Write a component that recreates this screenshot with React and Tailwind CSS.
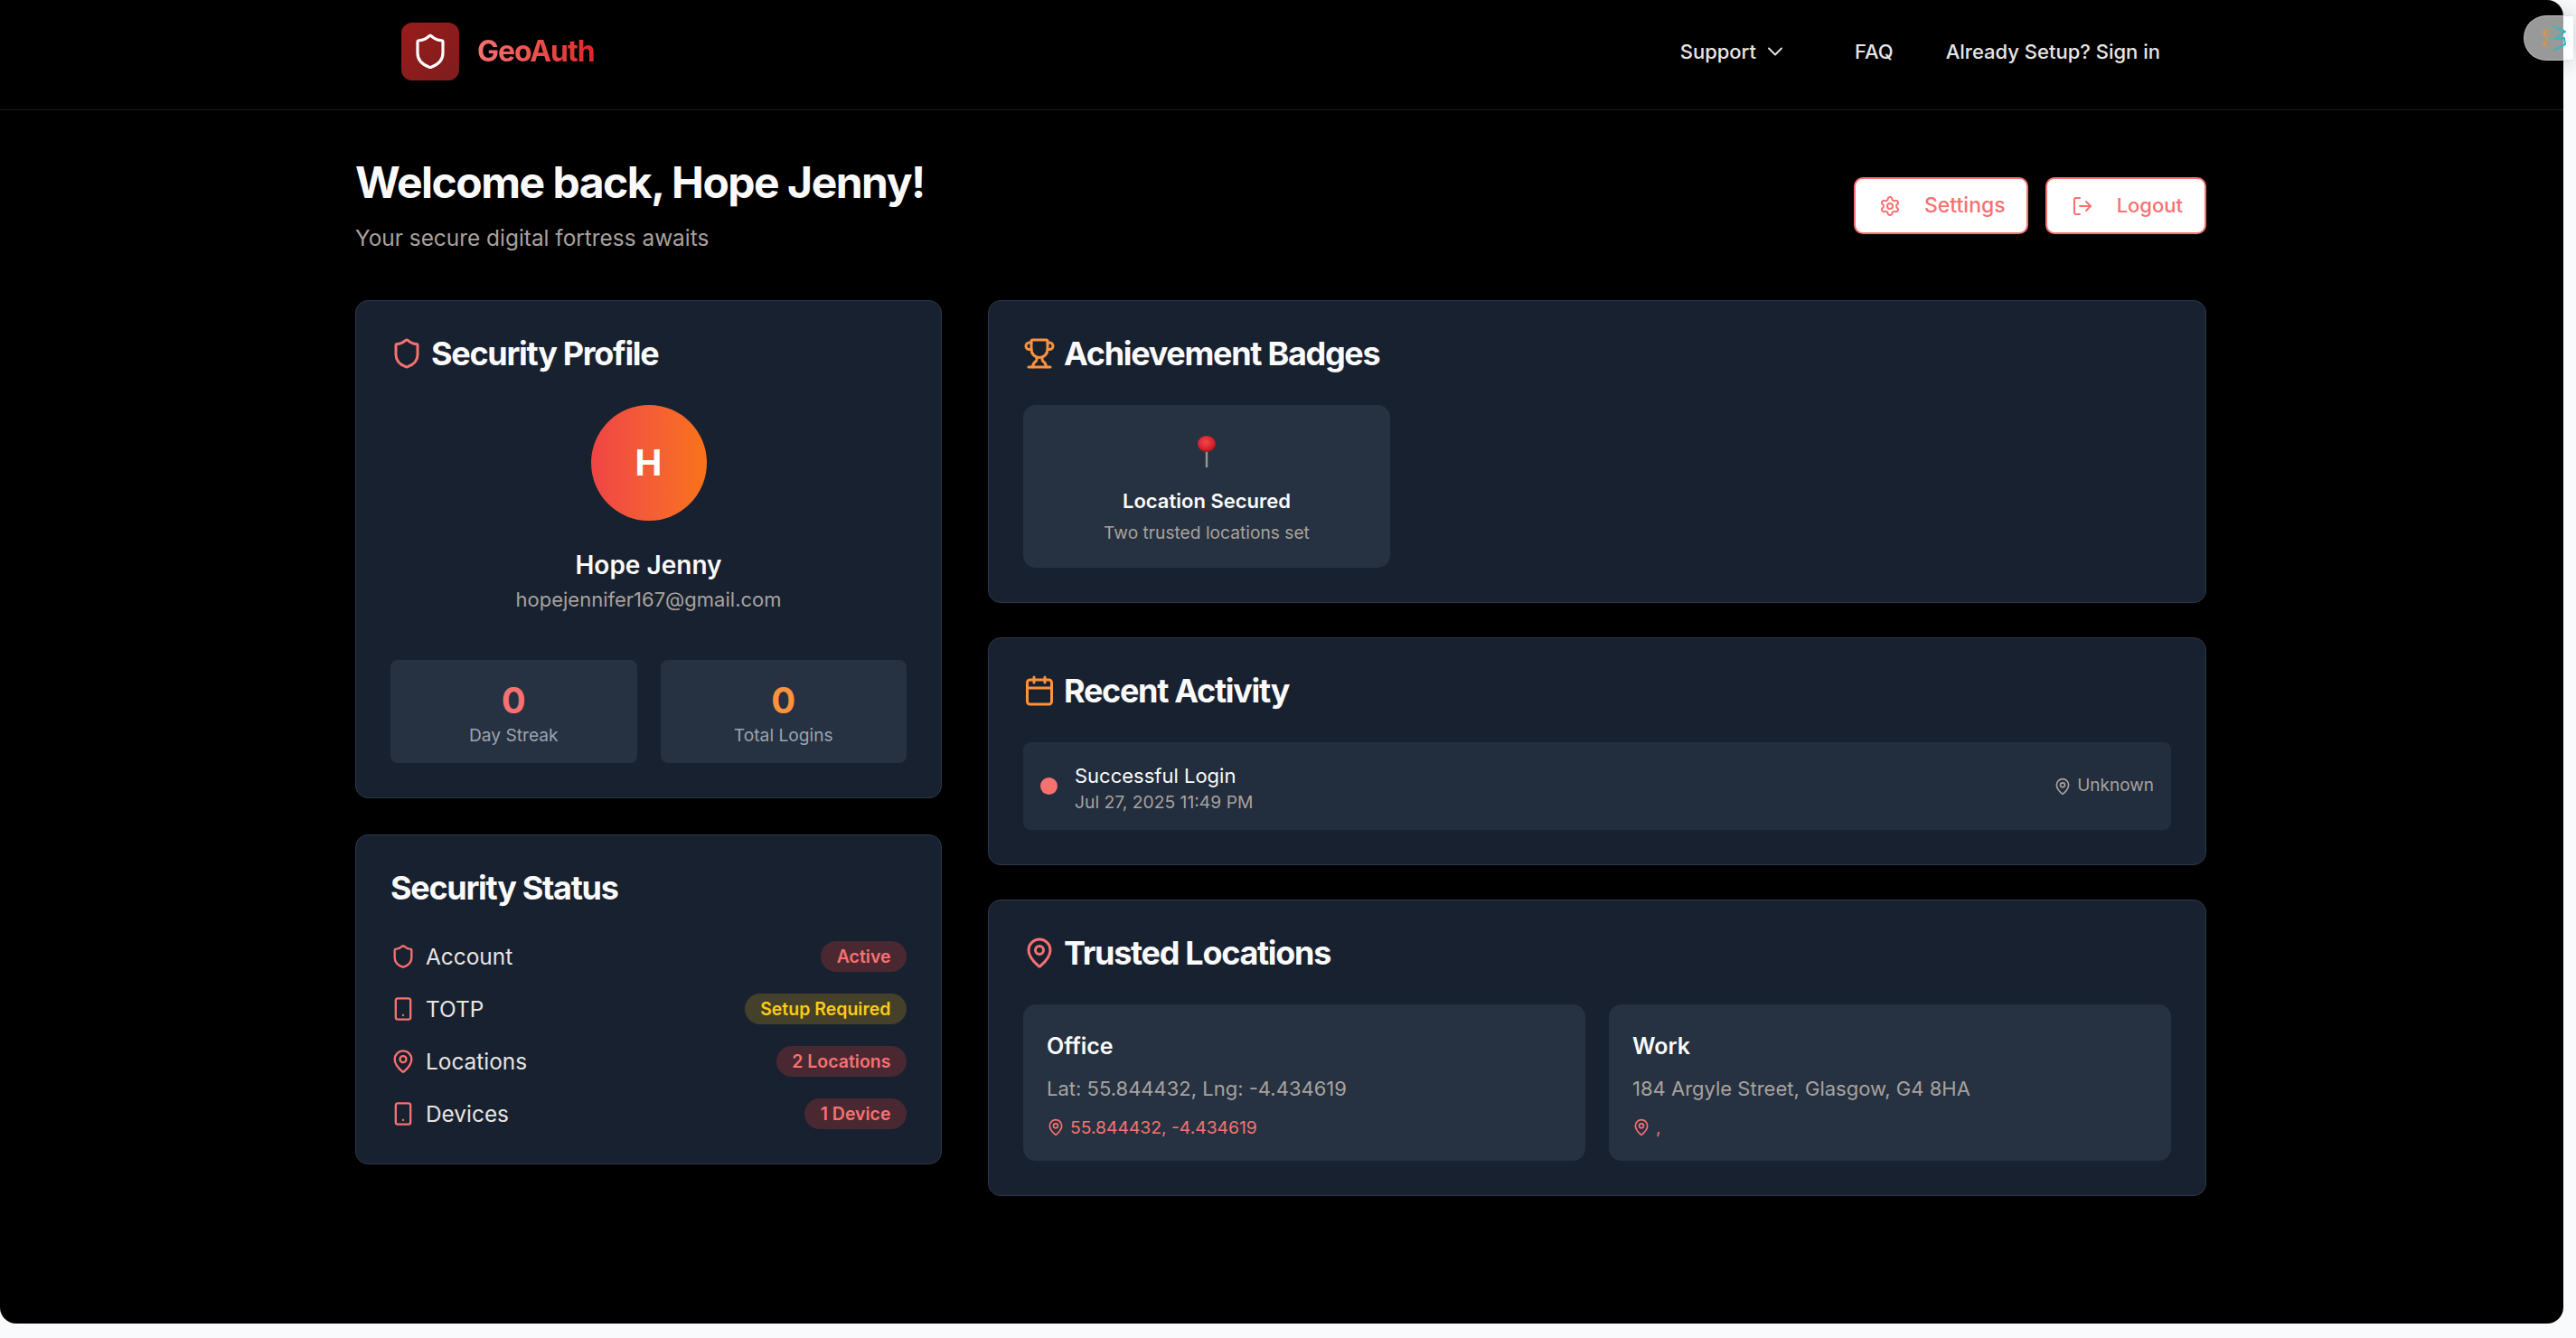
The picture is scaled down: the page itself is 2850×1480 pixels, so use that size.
import React from 'react';
import { Shield, ChevronDown, Settings, LogOut, Trophy, Calendar, MapPin, Smartphone } from 'lucide-react';

const statusRows = [
  { icon: Shield, label: 'Account', badge: 'Active' },
  { icon: Smartphone, label: 'TOTP', badge: 'Setup Required', warn: true },
  { icon: MapPin, label: 'Locations', badge: '2 Locations' },
  { icon: Smartphone, label: 'Devices', badge: '1 Device' },
];

const locations = [
  { name: 'Office', text: 'Lat: 55.844432, Lng: -4.434619', coords: '55.844432, -4.434619' },
  { name: 'Work', text: '184 Argyle Street, Glasgow, G4 8HA', coords: ',' },
];

const Card = ({ children }) => (
  <div className="rounded-[14px] border border-[#2c3848] bg-[#18212f] p-[38px]">{children}</div>
);

const CardTitle = ({ icon: Icon, color, children }) => (
  <div className="mb-[37px] flex h-[40px] items-center gap-[9px]">
    {Icon && <Icon size={36} strokeWidth={2} className={color} />}
    <h2 className="text-[36px] leading-[40px] font-bold tracking-[-1.3px] text-[#fafafa]">{children}</h2>
  </div>
);

const PushPin = () => (
  <svg width="22" height="35" viewBox="0 0 22 35">
    <defs>
      <radialGradient id="pinHead" cx="45%" cy="40%" r="60%">
        <stop offset="0%" stopColor="#f0474f" />
        <stop offset="70%" stopColor="#d9222c" />
        <stop offset="100%" stopColor="#a3161e" />
      </radialGradient>
    </defs>
    <rect x="9.8" y="16" width="2.4" height="19" fill="#a09488" />
    <ellipse cx="11" cy="9" rx="10" ry="9" fill="url(#pinHead)" />
  </svg>
);

const WidgetLogo = () => (
  <svg width="26" height="29" viewBox="0 0 26 29" fill="none" strokeWidth="2" strokeLinejoin="round">
    <defs>
      <linearGradient id="stack" x1="0" y1="0" x2="1" y2="0">
        <stop offset="0%" stopColor="#e8913e" />
        <stop offset="60%" stopColor="#3fb6b8" />
        <stop offset="100%" stopColor="#2fb4d0" />
      </linearGradient>
    </defs>
    <path d="M1 7 L13 1 L25 7 L13 15 Z" stroke="url(#stack)" />
    <path d="M1 7 L5 16 L1 21 L12 28 L25 21 L24 14 L13 15" stroke="url(#stack)" />
  </svg>
);

export default function App() {
  return (
    <div className="relative min-h-screen overflow-hidden bg-[#f8fafc] font-[family-name:Inter,sans-serif]">
      <div className="h-[1464px] w-[2836px] overflow-hidden rounded-b-[18px] rounded-tr-[18px] bg-black">
        {/* nav */}
        <header className="border-b border-[#1f1f1f]">
          <div className="ml-[393px] flex h-[121px] w-[2048px] items-center justify-between px-[51px] pb-[7px]">
            <div className="flex items-center gap-[20px]">
              <div className="flex h-[64px] w-[64px] items-center justify-center rounded-[12px] bg-gradient-to-br from-[#991b1b] to-[#7f1d1d]">
                <Shield size={42} strokeWidth={1.8} className="text-white" />
              </div>
              <span className="bg-gradient-to-r from-[#f87171] to-[#dc2626] bg-clip-text text-[32px] font-bold tracking-[-1.1px] text-transparent">
                GeoAuth
              </span>
            </div>
            <nav className="flex items-center text-[22px] font-medium text-[#e7e5e4]">
              <span className="flex items-center gap-[7px]">
                Support <ChevronDown size={28} strokeWidth={1.6} />
              </span>
              <span className="ml-[74px]">FAQ</span>
              <span className="ml-[58px]">Already Setup? Sign in</span>
            </nav>
          </div>
        </header>

        <main className="ml-[393px] w-[2048px]">
          {/* heading */}
          <div className="mb-[51px] flex items-center justify-between pt-[52px]">
            <div>
              <h1 className="text-[48px] leading-[56px] font-bold tracking-[-1.5px] text-[#fafafa]">Welcome back, Hope Jenny!</h1>
              <p className="mt-[15px] text-[24.4px] leading-[36px] text-[#a8a29e]">Your secure digital fortress awaits</p>
            </div>
            <div className="flex gap-[19px]">
              <button className="flex h-[63px] items-center gap-[26px] rounded-[10px] border-2 border-[#f87171] bg-white pr-[23px] pl-[26px] text-[23px] font-medium text-[#f87171]">
                <Settings size={24} strokeWidth={2} /> Settings
              </button>
              <button className="flex h-[63px] items-center gap-[26px] rounded-[10px] border-2 border-[#f87171] bg-white pr-[24px] pl-[27px] text-[22px] font-medium text-[#f87171]">
                <LogOut size={24} strokeWidth={2} /> Logout
              </button>
            </div>
          </div>

          <div className="grid grid-cols-[649px_1fr] gap-x-[51px]">
            {/* left column */}
            <div className="flex flex-col gap-[40px]">
              <Card>
                <CardTitle icon={Shield} color="text-[#f87171]">Security Profile</CardTitle>
                <div className="flex flex-col items-center">
                  <div className="flex h-[128px] w-[128px] items-center justify-center rounded-full bg-gradient-to-r from-[#ef4444] to-[#f97316] text-[40px] font-bold text-white">
                    H
                  </div>
                  <p className="mt-[31px] text-[28px] leading-[36px] font-semibold text-[#fafafa]">Hope Jenny</p>
                  <p className="mt-[4px] text-[22px] leading-[32px] text-[#a8a29e]">hopejennifer167@gmail.com</p>
                </div>
                <div className="mt-[51px] grid grid-cols-2 gap-[26px]">
                  <div className="flex h-[114px] flex-col items-center rounded-[8px] bg-[#263241] pt-[23px]">
                    <span className="text-[40px] leading-[44px] font-bold text-[#f87171]">0</span>
                    <span className="mt-[2px] text-[19.2px] leading-[28px] text-[#9ca3af]">Day Streak</span>
                  </div>
                  <div className="flex h-[114px] flex-col items-center rounded-[8px] bg-[#263241] pt-[23px]">
                    <span className="text-[40px] leading-[44px] font-bold text-[#fb923c]">0</span>
                    <span className="mt-[2px] text-[19.2px] leading-[28px] text-[#9ca3af]">Total Logins</span>
                  </div>
                </div>
              </Card>

              <Card>
                <h2 className="mb-[39px] text-[36px] leading-[40px] font-bold tracking-[-1.3px] text-[#fafafa]">Security Status</h2>
                <div className="flex flex-col gap-[24px]">
                  {statusRows.map((row) => (
                    <div key={row.label} className="flex h-[34px] items-center justify-between">
                      <div className="flex items-center gap-[11px]">
                        <row.icon size={28} strokeWidth={2} className="text-[#f87171]" />
                        <span className="text-[24.4px] text-[#e7e5e4]">{row.label}</span>
                      </div>
                      <span
                        className={
                          row.warn
                            ? 'rounded-full bg-[#45402a] px-[17.5px] text-[19.5px] leading-[34px] font-semibold text-[#facc15]'
                            : 'rounded-full bg-[#4a2832] px-[17.5px] text-[19.5px] leading-[34px] font-semibold text-[#f87171]'
                        }
                      >
                        {row.badge}
                      </span>
                    </div>
                  ))}
                </div>
              </Card>
            </div>

            {/* right column */}
            <div className="flex flex-col gap-[38px]">
              <Card>
                <CardTitle icon={Trophy} color="text-[#fb923c]">Achievement Badges</CardTitle>
                <div className="grid grid-cols-3 gap-[26px]">
                  <div className="flex h-[180px] flex-col items-center rounded-[14px] bg-[#263241] pt-[34px]">
                    <PushPin />
                    <p className="mt-[22px] text-[22px] leading-[30px] font-semibold text-[#fafafa]">Location Secured</p>
                    <p className="mt-[6px] text-[19.2px] leading-[28px] text-[#a8a29e]">Two trusted locations set</p>
                  </div>
                </div>
              </Card>

              <Card>
                <CardTitle icon={Calendar} color="text-[#fb923c]">Recent Activity</CardTitle>
                <div className="flex h-[97px] items-center justify-between rounded-[8px] bg-[#222d3d] px-[19px]">
                  <div className="flex items-center gap-[19px]">
                    <span className="h-[19px] w-[19px] rounded-full bg-[#f87171]" />
                    <div className="mt-[4px]">
                      <p className="text-[22px] leading-[30px] font-normal text-[#fafafa]">Successful Login</p>
                      <p className="text-[19.3px] leading-[28px] text-[#a8a29e]">Jul 27, 2025 11:49 PM</p>
                    </div>
                  </div>
                  <div className="flex items-center gap-[6px] text-[19px] text-[#a8a29e]">
                    <MapPin size={20} strokeWidth={2} /> Unknown
                  </div>
                </div>
              </Card>

              <Card>
                <CardTitle icon={MapPin} color="text-[#f87171]">Trusted Locations</CardTitle>
                <div className="grid grid-cols-2 gap-[26px]">
                  {locations.map((loc) => (
                    <div key={loc.name} className="h-[173px] rounded-[14px] bg-[#263241] px-[26px] pt-[28px]">
                      <p className="text-[25px] leading-[36px] font-semibold text-[#fafafa]">{loc.name}</p>
                      <p className="mt-[13px] text-[22px] leading-[32px] text-[#a8a29e]">{loc.text}</p>
                      <div className="mt-[13px] flex h-[28px] items-center gap-[6px] text-[19.3px] text-[#f87171]">
                        <MapPin size={20} strokeWidth={2} /> {loc.coords}
                      </div>
                    </div>
                  ))}
                </div>
              </Card>
            </div>
          </div>
        </main>
      </div>

      {/* floating extension tab */}
      <div className="absolute top-[17px] left-[2792px] flex h-[50px] w-[55px] items-center rounded-l-[25px] border border-r-0 border-[#cfcfcf]/60 bg-white/60 pl-[20px] shadow-[0_0_24px_rgba(0,0,0,0.2)]">
        <WidgetLogo />
      </div>
    </div>
  );
}
